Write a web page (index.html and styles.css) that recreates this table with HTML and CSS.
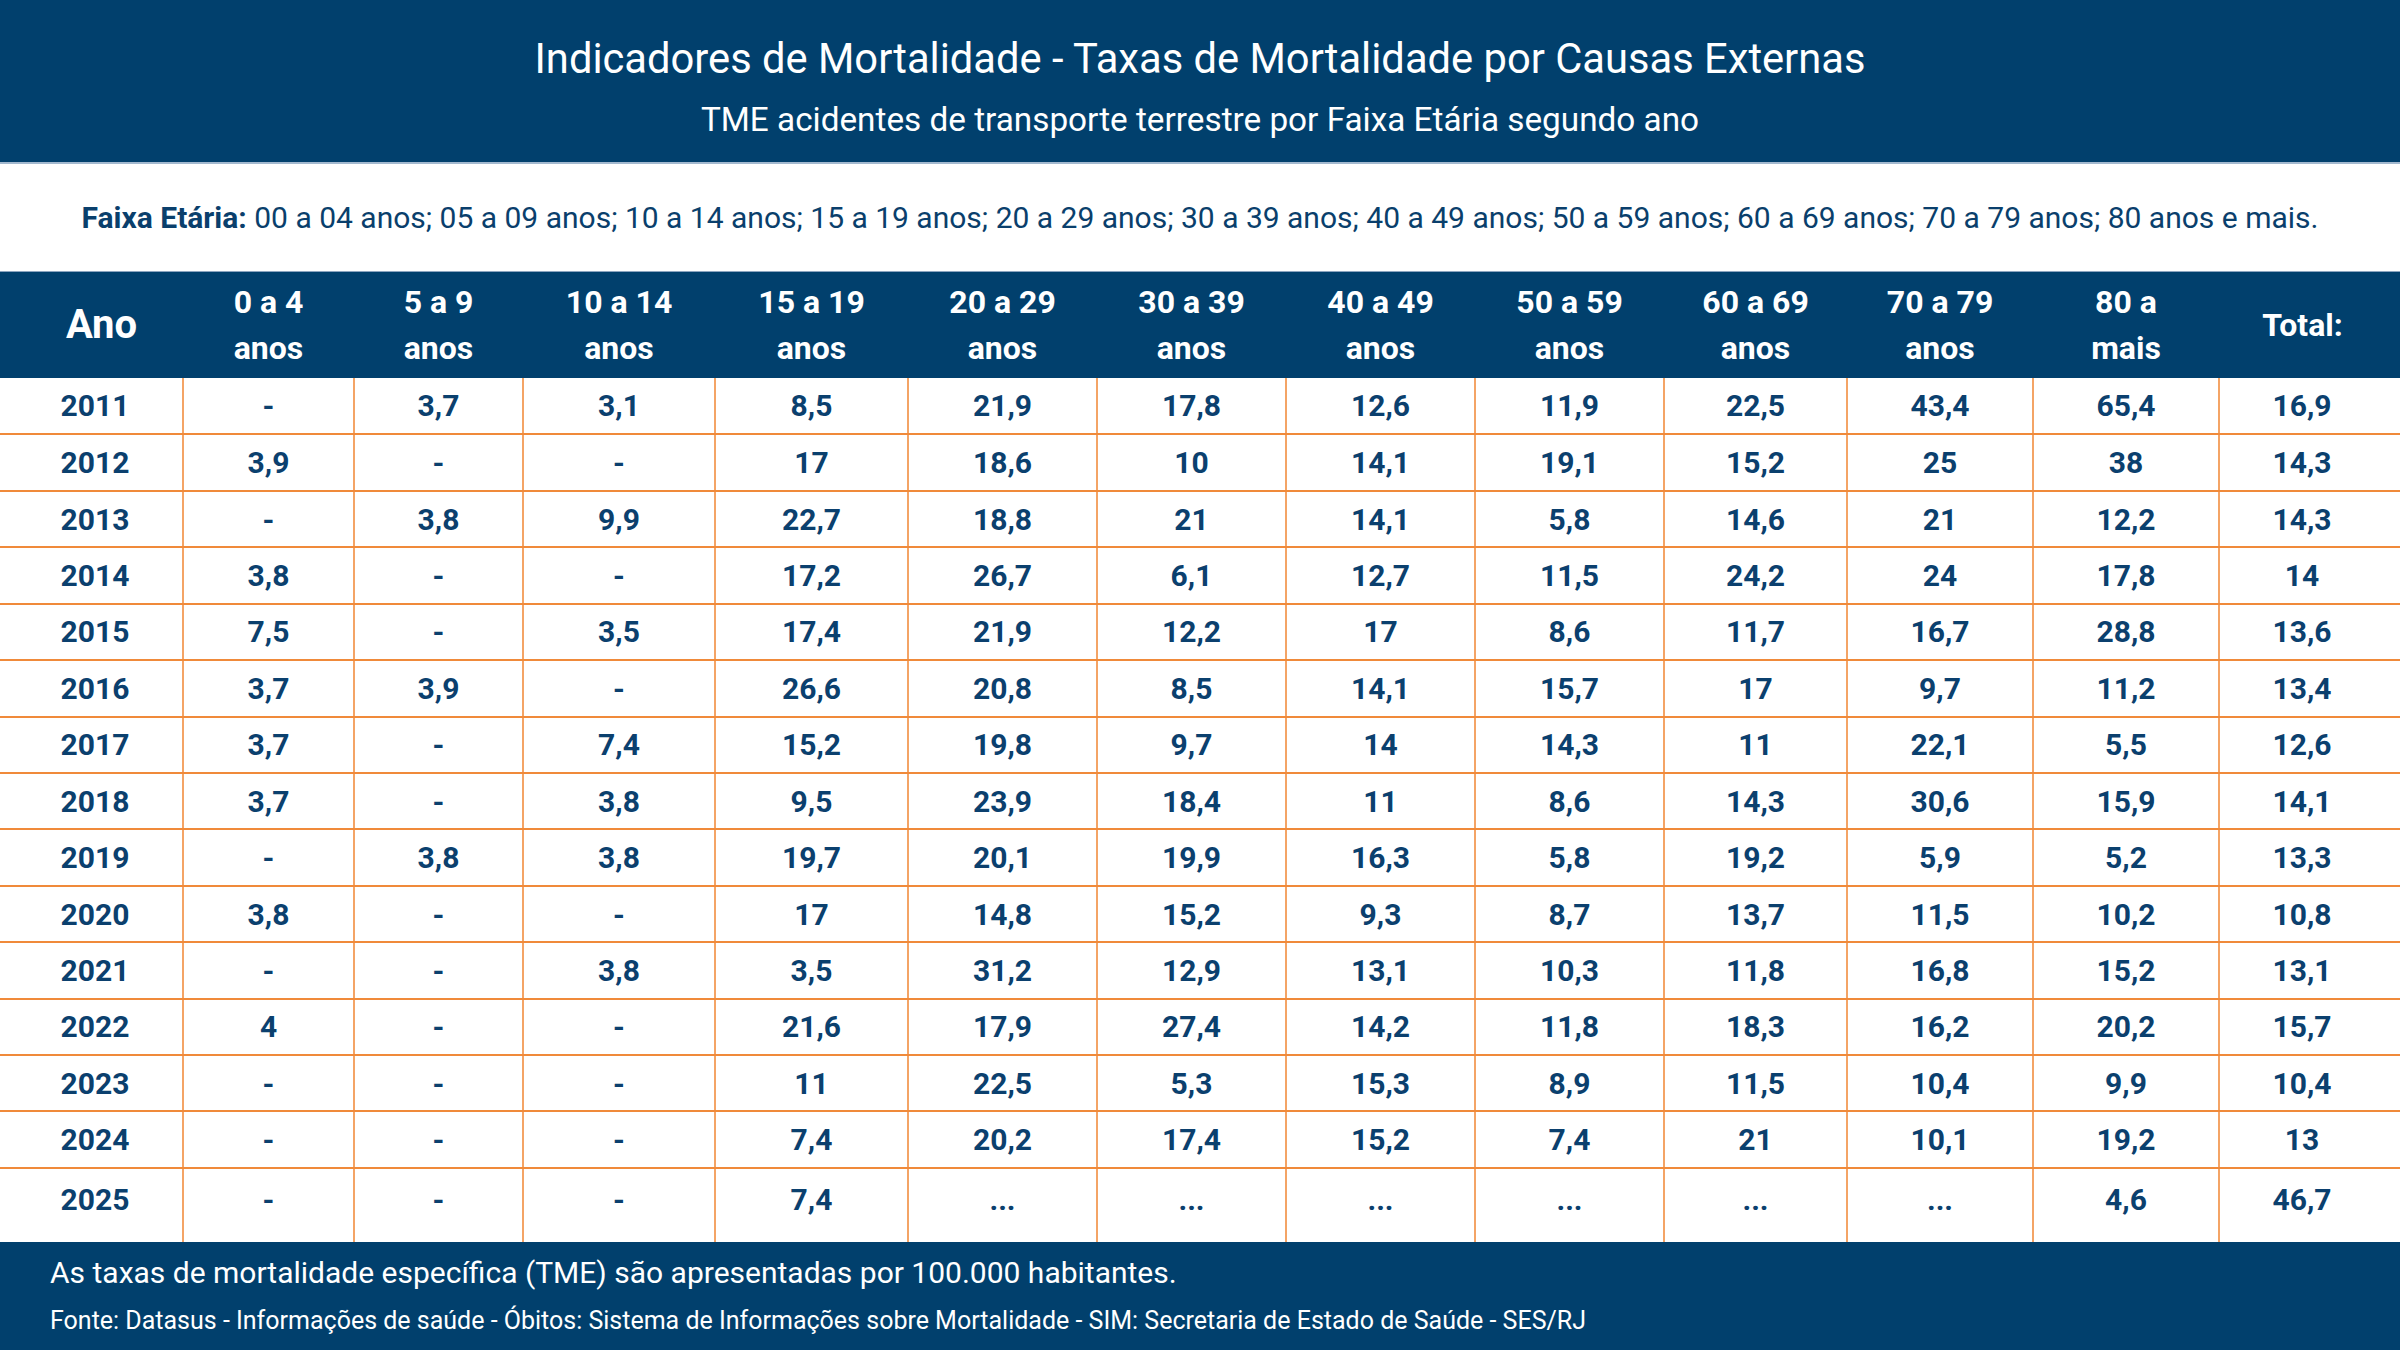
FILE: index.html
```html
<!DOCTYPE html>
<html lang="pt-BR">
<head>
<meta charset="utf-8">
<title>Indicadores de Mortalidade</title>
<link rel="stylesheet" href="styles.css">
</head>
<body>
<div class="page">
  <header class="hero">
    <h1 class="hero-title">Indicadores de Mortalidade - Taxas de Mortalidade por Causas Externas</h1>
    <p class="hero-sub">TME acidentes de transporte terrestre por Faixa Etária segundo ano</p>
  </header>
  <div class="legend"><b>Faixa Etária:</b> 00 a 04 anos; 05 a 09 anos; 10 a 14 anos; 15 a 19 anos; 20 a 29 anos; 30 a 39 anos; 40 a 49 anos; 50 a 59 anos; 60 a 69 anos; 70 a 79 anos; 80 anos e mais.</div>
  <table class="grid">
    <colgroup>
      <col class="c-year"><col class="c1"><col class="c2"><col class="c3"><col class="c4"><col class="c5"><col class="c6"><col class="c7"><col class="c8"><col class="c9"><col class="c10"><col class="c11"><col class="c-total">
    </colgroup>
    <thead>
      <tr>
        <th class="th-year">Ano</th>
        <th>0 a 4<br>anos</th>
        <th>5 a 9<br>anos</th>
        <th>10 a 14<br>anos</th>
        <th>15 a 19<br>anos</th>
        <th>20 a 29<br>anos</th>
        <th>30 a 39<br>anos</th>
        <th>40 a 49<br>anos</th>
        <th>50 a 59<br>anos</th>
        <th>60 a 69<br>anos</th>
        <th>70 a 79<br>anos</th>
        <th>80 a<br>mais</th>
        <th class="th-total">Total:</th>
      </tr>
    </thead>
    <tbody>
      <tr><td>2011</td><td>-</td><td>3,7</td><td>3,1</td><td>8,5</td><td>21,9</td><td>17,8</td><td>12,6</td><td>11,9</td><td>22,5</td><td>43,4</td><td>65,4</td><td>16,9</td></tr>
      <tr><td>2012</td><td>3,9</td><td>-</td><td>-</td><td>17</td><td>18,6</td><td>10</td><td>14,1</td><td>19,1</td><td>15,2</td><td>25</td><td>38</td><td>14,3</td></tr>
      <tr><td>2013</td><td>-</td><td>3,8</td><td>9,9</td><td>22,7</td><td>18,8</td><td>21</td><td>14,1</td><td>5,8</td><td>14,6</td><td>21</td><td>12,2</td><td>14,3</td></tr>
      <tr><td>2014</td><td>3,8</td><td>-</td><td>-</td><td>17,2</td><td>26,7</td><td>6,1</td><td>12,7</td><td>11,5</td><td>24,2</td><td>24</td><td>17,8</td><td>14</td></tr>
      <tr><td>2015</td><td>7,5</td><td>-</td><td>3,5</td><td>17,4</td><td>21,9</td><td>12,2</td><td>17</td><td>8,6</td><td>11,7</td><td>16,7</td><td>28,8</td><td>13,6</td></tr>
      <tr><td>2016</td><td>3,7</td><td>3,9</td><td>-</td><td>26,6</td><td>20,8</td><td>8,5</td><td>14,1</td><td>15,7</td><td>17</td><td>9,7</td><td>11,2</td><td>13,4</td></tr>
      <tr><td>2017</td><td>3,7</td><td>-</td><td>7,4</td><td>15,2</td><td>19,8</td><td>9,7</td><td>14</td><td>14,3</td><td>11</td><td>22,1</td><td>5,5</td><td>12,6</td></tr>
      <tr><td>2018</td><td>3,7</td><td>-</td><td>3,8</td><td>9,5</td><td>23,9</td><td>18,4</td><td>11</td><td>8,6</td><td>14,3</td><td>30,6</td><td>15,9</td><td>14,1</td></tr>
      <tr><td>2019</td><td>-</td><td>3,8</td><td>3,8</td><td>19,7</td><td>20,1</td><td>19,9</td><td>16,3</td><td>5,8</td><td>19,2</td><td>5,9</td><td>5,2</td><td>13,3</td></tr>
      <tr><td>2020</td><td>3,8</td><td>-</td><td>-</td><td>17</td><td>14,8</td><td>15,2</td><td>9,3</td><td>8,7</td><td>13,7</td><td>11,5</td><td>10,2</td><td>10,8</td></tr>
      <tr><td>2021</td><td>-</td><td>-</td><td>3,8</td><td>3,5</td><td>31,2</td><td>12,9</td><td>13,1</td><td>10,3</td><td>11,8</td><td>16,8</td><td>15,2</td><td>13,1</td></tr>
      <tr><td>2022</td><td>4</td><td>-</td><td>-</td><td>21,6</td><td>17,9</td><td>27,4</td><td>14,2</td><td>11,8</td><td>18,3</td><td>16,2</td><td>20,2</td><td>15,7</td></tr>
      <tr><td>2023</td><td>-</td><td>-</td><td>-</td><td>11</td><td>22,5</td><td>5,3</td><td>15,3</td><td>8,9</td><td>11,5</td><td>10,4</td><td>9,9</td><td>10,4</td></tr>
      <tr><td>2024</td><td>-</td><td>-</td><td>-</td><td>7,4</td><td>20,2</td><td>17,4</td><td>15,2</td><td>7,4</td><td>21</td><td>10,1</td><td>19,2</td><td>13</td></tr>
      <tr class="row-last"><td>2025</td><td>-</td><td>-</td><td>-</td><td>7,4</td><td>...</td><td>...</td><td>...</td><td>...</td><td>...</td><td>...</td><td>4,6</td><td>46,7</td></tr>
    </tbody>
  </table>
  <footer class="foot">
    <p class="foot-note">As taxas de mortalidade específica (TME) são apresentadas por 100.000 habitantes.</p>
    <p class="foot-src">Fonte: Datasus - Informações de saúde - Óbitos: Sistema de Informações sobre Mortalidade - SIM: Secretaria de Estado de Saúde - SES/RJ</p>
  </footer>
</div>
</body>
</html>
```

FILE: styles.css
```css
* { box-sizing: border-box; }
html, body { margin: 0; padding: 0; background: #ffffff; }
body { font-family: Roboto, "Liberation Sans", sans-serif; }

.page {
  width: 2400px;
  height: 1350px;
  display: flex;
  flex-direction: column;
  overflow: hidden;
}

.hero {
  height: 164px;
  background: #01406d;
  border-bottom: 2px solid #a3b9cf;
  color: #ffffff;
  text-align: center;
  padding-top: 34px;
}
.hero-title {
  margin: 0;
  font-size: 41.7px;
  font-weight: 400;
  line-height: 50px;
}
.hero-sub {
  margin: 14px 0 0;
  font-size: 33.3px;
  font-weight: 400;
  line-height: 44px;
}

.legend {
  height: 108px;
  line-height: 107px;
  text-align: center;
  white-space: nowrap;
  font-size: 30px;
  color: #0a3f6c;
  border-bottom: 1px solid #8ca5bf;
}
.legend b { font-weight: 700; }

.grid {
  width: 2400px;
  border-collapse: collapse;
  table-layout: fixed;
}
.c-year { width: 183px; }
.c1 { width: 171px; }
.c2 { width: 169px; }
.c3 { width: 192px; }
.c4 { width: 193px; }
.c5 { width: 189px; }
.c6 { width: 189px; }
.c7 { width: 189px; }
.c8 { width: 189px; }
.c9 { width: 183px; }
.c10 { width: 186px; }
.c11 { width: 186px; }
.c-total { width: 181px; }

.grid thead tr { height: 106px; }
.grid th {
  background: #01406d;
  color: #ffffff;
  font-size: 32px;
  font-weight: 700;
  line-height: 46px;
  padding: 0;
  text-align: center;
  vertical-align: middle;
}
.grid th.th-year { font-size: 40px; padding-left: 20px; }
.grid th.th-total { font-size: 32px; padding-right: 14px; }

.grid td {
  height: 56.43px;
  padding: 0;
  text-align: center;
  vertical-align: middle;
  font-size: 30px;
  font-weight: 700;
  color: #0b406e;
  border-left: 2px solid #f4a466;
  border-bottom: 2px solid #f08a3a;
}
.grid td:first-child { border-left: none; padding-left: 8px; }
.grid td:last-child { padding-right: 16px; }
.grid .row-last td {
  height: 74px;
  border-bottom: none;
  padding-bottom: 12px;
}

.foot {
  flex: 1;
  background: #01406d;
  color: #ffffff;
  padding: 11px 50px 0;
}
.foot-note {
  margin: 0;
  font-size: 30px;
  line-height: 40px;
}
.foot-src {
  margin: 8px 0 0;
  font-size: 25px;
  line-height: 40px;
}
```
